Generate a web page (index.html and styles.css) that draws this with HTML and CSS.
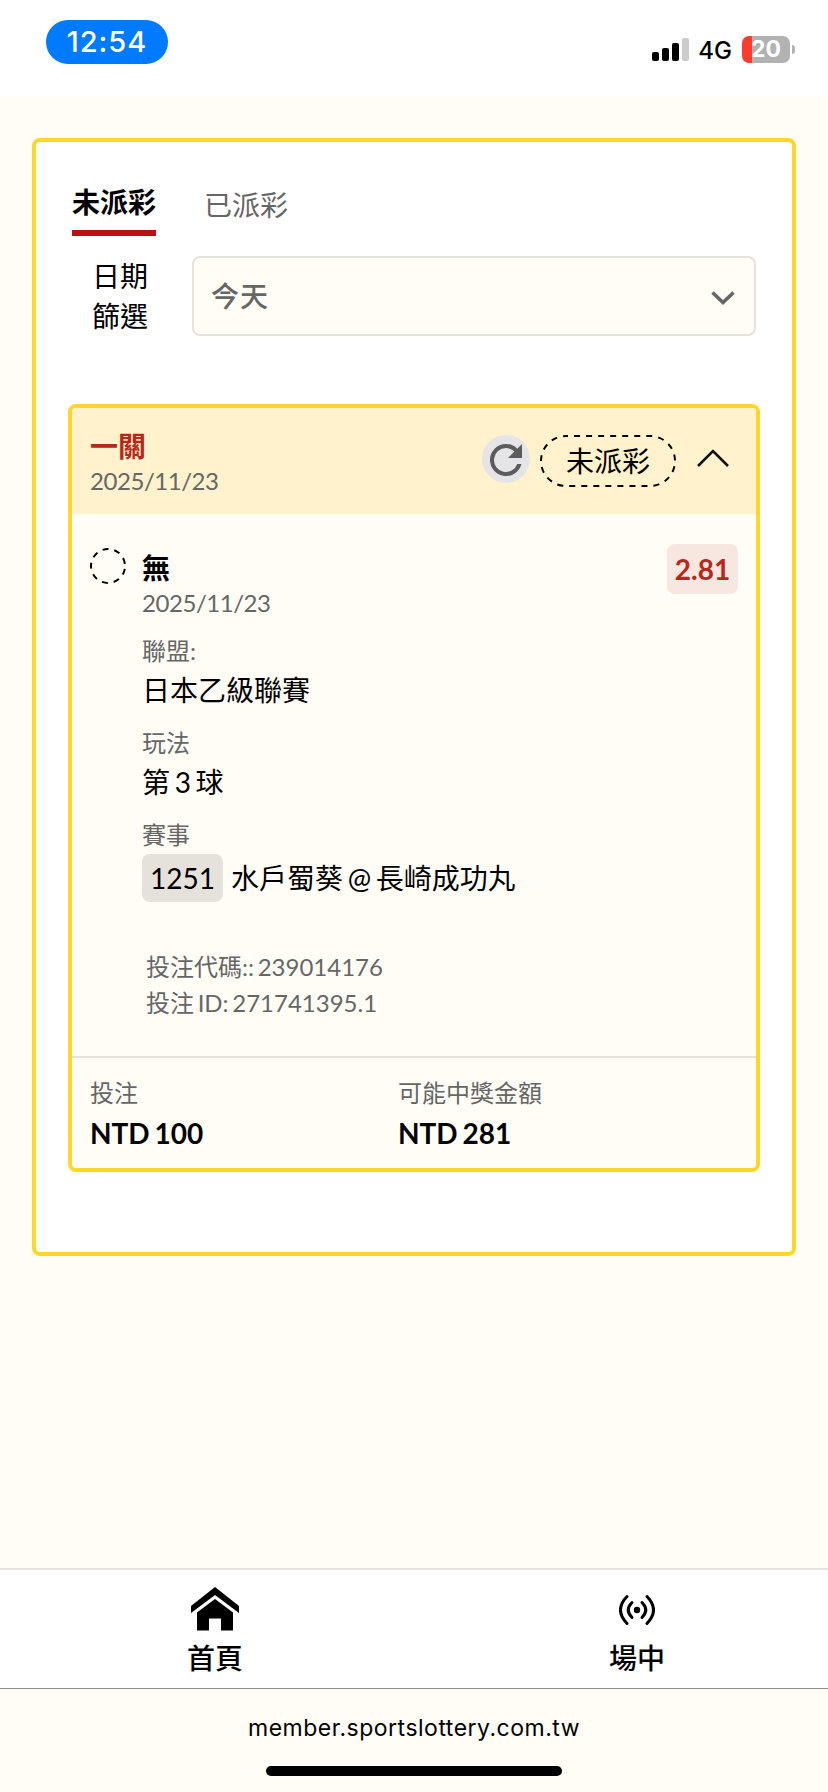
FILE: index.html
```
<!DOCTYPE html>
<html lang="zh-Hant">
<head>
    <meta charset="UTF-8">
    <title>投注紀錄</title>
    <link rel="stylesheet" href="styles.css">
</head>
<body>
<!--狀態列-->
<div class="status">
    <div class="time">12:54</div>
    <div class="status-right">
        <svg class="signal" width="38" height="24" viewBox="0 0 38 24">
            <rect x="0" y="14" width="7" height="9" rx="2"/>
            <rect x="10" y="10" width="7" height="13" rx="2"/>
            <rect x="20" y="5" width="7" height="18" rx="2"/>
            <rect x="30" y="0" width="7" height="23" rx="2" fill="#ccc"/>
        </svg>
        <span class="net">4G</span>
        <div class="battery">20</div>
        <div class="battery-tip"></div>
    </div>
</div>

<div class="main">
    <div class="panel">
        <div class="tabs">
            <div class="tab active">未派彩</div>
            <div class="tab">已派彩</div>
        </div>

        <div class="filter">
            <div class="filter-label">日期<br>篩選</div>
            <div class="select">
                <span>今天</span>
                <svg class="arrow" width="24" height="14" viewBox="0 0 24 14" fill="none" stroke="#666" stroke-width="3.6">
                    <path d="M1.500 1.500L12 11.500L22.500 1.500"/>
                </svg>
            </div>
        </div>

        <!--注單-->
        <div class="bet">
            <div class="bet-head">
                <div class="bet-title">
                    <div class="name">一關</div>
                    <div class="date">2025/11/23</div>
                </div>
                <div class="refresh">
                    <svg width="32" height="32" viewBox="4 4 16 16" fill="#5c5c5c">
                        <path d="M17.65 6.35A7.96 7.96 0 0 0 12 4a8 8 0 1 0 7.73 10h-2.08A6 6 0 1 1 12 6c1.66 0 3.14.69 4.22 1.78L13 11h7V4z"/>
                    </svg>
                </div>
                <div class="state">
                    <svg class="state-line" width="136" height="52" fill="none" stroke="#000" stroke-width="2">
                        <rect x="1" y="1" width="134" height="50" rx="25" stroke-dasharray="6 6.040" stroke-dashoffset="4"/>
                    </svg>
                    未派彩
                </div>
                <svg class="fold" width="32" height="18" viewBox="0 0 32 18" fill="none" stroke="#111" stroke-width="2.6">
                    <path d="M1 17L16 2L31 17"/>
                </svg>
            </div>

            <div class="bet-body">
                <svg class="dot" width="36" height="36" fill="none" stroke="#000" stroke-width="2">
                    <circle cx="18" cy="18" r="17" stroke-dasharray="6 5.870" stroke-dashoffset="-2.900"/>
                </svg>
                <div class="info">
                    <div class="team">無</div>
                    <div class="date">2025/11/23</div>
                    <div class="label">聯盟:</div>
                    <div class="value">日本乙級聯賽</div>
                    <div class="label">玩法</div>
                    <div class="value">第 3 球</div>
                    <div class="label">賽事</div>
                    <div class="match"><span class="code">1251</span><span>水戶蜀葵 @ 長崎成功丸</span></div>
                    <div class="ids">投注代碼:: 239014176<br>投注 ID: 271741395.1</div>
                </div>
                <div class="odds">2.81</div>
            </div>

            <div class="bet-foot">
                <div class="cell">
                    <div class="label">投注</div>
                    <div class="money">NTD 100</div>
                </div>
                <div class="cell">
                    <div class="label">可能中獎金額</div>
                    <div class="money">NTD 281</div>
                </div>
            </div>
        </div>
    </div>
</div>

<!--底部導覽-->
<div class="nav">
    <div class="nav-item">
        <svg width="48" height="44" viewBox="0 0 48 44">
            <path d="M24 0L48 19V26L24 8L0 26V19Z"/>
            <path d="M24 12L42 25.500V43.500H30V31.500H18V43.500H6V25.500Z"/>
        </svg>
        <span>首頁</span>
    </div>
    <div class="nav-item">
        <svg width="36" height="44" viewBox="0 0 36 44" fill="none" stroke="#000" stroke-width="3" stroke-linecap="round">
            <circle cx="18" cy="23" r="3.200" fill="#000" stroke="none"/>
            <path d="M8 9.500Q-5 23 8 36.500"/>
            <path d="M13 15.500Q5.500 23 13 30.500"/>
            <path d="M23 15.500Q30.500 23 23 30.500"/>
            <path d="M28 9.500Q41 23 28 36.500"/>
        </svg>
        <span>場中</span>
    </div>
</div>

<div class="browser">
    <div class="url">member.sportslottery.com.tw</div>
    <div class="home-bar"></div>
</div>
</body>
</html>
```
FILE: styles.css
```
*{
    box-sizing: border-box;
}

body{
    margin: 0;
    width: 828px;
    height: 1792px;
    display: flex;
    flex-direction: column;
    background-color: #fffdf6;
    color: #000;
    font-family: Lato, "Noto Sans CJK TC", sans-serif;
    font-size: 28px;
    overflow: hidden;
}

svg{
    display: block;
    flex: none;
}

/*狀態列*/
.status{
    height: 96px;
    padding: 20px 33px 0 46px;
    display: flex;
    justify-content: space-between;
    background-color: #fff;
    font-family: Inter, sans-serif;
}

.time{
    width: 122px;
    height: 44px;
    line-height: 44px;
    border-radius: 22px;
    background-color: #007aff;
    color: #fff;
    font-size: 29px;
    font-weight: 500;
    letter-spacing: 1px;
    text-align: center;
}

.status-right{
    height: 27px;
    margin-top: 16px;
    display: flex;
    align-items: center;
}

.net{
    margin: 1px 10px 0 8px;
    font-size: 24px;
    font-weight: 500;
    line-height: 27px;
}

.battery{
    width: 48px;
    height: 27px;
    border-radius: 7px;
    background: linear-gradient(to right, #ff3b30 10px, #b2b2b2 10px);
    color: #fff;
    font-size: 23px;
    font-weight: 700;
    line-height: 27px;
    text-align: center;
}

.battery-tip{
    width: 3px;
    height: 9px;
    margin-left: 2px;
    border-radius: 0 4px 4px 0;
    background-color: #b2b2b2;
}

/*內容*/
.main{
    flex: 1;
    padding: 42px 32px 0;
}

.panel{
    height: 1118px;
    padding: 32px 32px 0;
    border: 4px solid #ffd629;
    border-radius: 8px;
    background-color: #fff;
}

.tabs{
    display: flex;
    gap: 48px;
    padding: 0 4px;
}

.tab{
    height: 62px;
    line-height: 60px;
    padding-top: 1px;
    color: #666;
}

.tab.active{
    padding-top: 0;
    line-height: 56px;
    color: #000;
    font-weight: 700;
    border-bottom: 6px solid #bb1011;
}

.filter{
    display: flex;
    justify-content: space-between;
    margin-top: 20px;
    padding: 0 4px 0 24px;
    line-height: 40px;
}

.select{
    width: 564px;
    height: 80px;
    padding: 0 19px 0 17px;
    display: flex;
    align-items: center;
    justify-content: space-between;
    border: 2px solid #e6e2dc;
    border-radius: 8px;
    background-color: #fffdf6;
    color: #666;
    letter-spacing: 1px;
    font-weight: 500;
}

.arrow{
    margin-top: 3px;
}

/*注單*/
.bet{
    height: 768px;
    margin-top: 68px;
    display: flex;
    flex-direction: column;
    border: 4px solid #ffd629;
    border-radius: 8px;
    background-color: #fffdf6;
    overflow: hidden;
}

.bet-head{
    height: 106px;
    padding: 0 27px 0 18px;
    display: flex;
    background-color: #fff2cc;
}

.bet-title{
    flex: 1;
    padding-top: 20px;
}

.name{
    height: 36px;
    line-height: 36px;
    color: #b9261a;
    font-weight: 700;
}

.date{
    height: 36px;
    line-height: 34px;
    color: #666;
    font-size: 24px;
    letter-spacing: -0.45px;
}

.refresh{
    width: 48px;
    height: 48px;
    margin: 27px 10px 0 0;
    padding: 9px 8px;
    border-radius: 50%;
    background-color: #e5e5e7;
}

.state{
    position: relative;
    width: 136px;
    height: 52px;
    margin: 27px 21px 0 0;
    line-height: 52px;
    text-align: center;
}

/*虛線外框*/
.state-line{
    position: absolute;
    top: 0;
    left: 0;
}

.fold{
    margin-top: 41px;
}

.bet-body{
    flex: 1;
    display: flex;
    padding: 30px 18px 0;
}

.dot{
    margin: 4px 16px 0 0;
}

.info{
    flex: 1;
    padding-top: 6px;
    word-spacing: -2.5px;
}

.team{
    height: 36px;
    line-height: 36px;
    font-weight: 700;
}

.label{
    height: 36px;
    line-height: 36px;
    color: #666;
    font-size: 24px;
}

.info .label{
    margin-top: 12px;
    line-height: 34px;
}

.value{
    height: 44px;
    line-height: 40px;
}

.match{
    display: flex;
    height: 50px;
    line-height: 48px;
}

.code{
    width: 81px;
    height: 48px;
    margin: 0 8px 0 0;
    border-radius: 8px;
    background-color: #e5e2dc;
    text-align: center;
}

.ids{
    margin: 45px 0 0 4px;
    color: #666;
    font-size: 24px;
    line-height: 36px;
}

.odds{
    width: 71px;
    height: 50px;
    line-height: 51px;
    border-radius: 8px;
    background-color: #f8e7e0;
    color: #b9261a;
    font-weight: 700;
    text-align: center;
}

.bet-foot{
    height: 112px;
    padding: 17px 18px 0;
    display: flex;
    border-top: 2px solid #e5e2dc;
}

.cell{
    width: 308px;
}

.money{
    line-height: 44px;
    font-weight: 700;
    word-spacing: -2px;
}

/*底部導覽*/
.nav{
    height: 121px;
    padding: 17px 0 0 4px;
    display: flex;
    border-top: 2px solid #e5e5e5;
    border-bottom: 1px solid #8e8e8e;
    background-color: #fff;
}

.nav-item{
    flex: none;
    width: 422px;
    display: flex;
    flex-direction: column;
    align-items: center;
    line-height: 40px;
    font-weight: 500;
}

.nav-item span{
    margin-top: 7px;
}

.browser{
    height: 103px;
    padding-top: 24px;
    display: flex;
    flex-direction: column;
    align-items: center;
    font-family: Inter, sans-serif;
    font-size: 23px;
    line-height: 30px;
}

.url{
    letter-spacing: 0.5px;
}

.home-bar{
    width: 296px;
    height: 10px;
    margin-top: 23px;
    border-radius: 5px;
    background-color: #000;
}
```
